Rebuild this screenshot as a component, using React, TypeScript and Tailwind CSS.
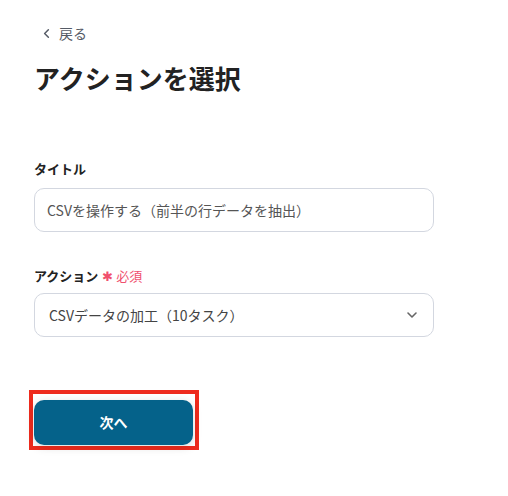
import { ChevronDown, ChevronLeft } from 'lucide-react'

const font = { fontFamily: '"Noto Sans CJK JP", "Noto Sans", sans-serif' }

function App(): JSX.Element {
  return (
    <div className="min-h-[496px] w-[508px] bg-white pl-[34px] pt-[24px]" style={font}>
      {/* Back link */}
      <div className="flex h-[18px] items-center gap-[5px] pl-[5px] text-[14px] text-[#555b66]">
        <ChevronLeft className="h-[15px] w-[15px]" strokeWidth={2.4} />
        <span>戻る</span>
      </div>

      {/* Title */}
      <h1 className="mt-[17px] text-[26px] leading-[38px] font-bold text-[#222]">アクションを選択</h1>

      {/* Form */}
      <div className="mt-[63px] w-[400px]">
        <label className="block text-[13px] leading-[18px] font-bold text-[#222]">タイトル</label>
        <div className="mt-[10px] flex h-[44px] items-center rounded-[10px] border border-[#d3d7e0] px-[12px] text-[14px] text-[#555]">
          CSVを操作する（前半の行データを抽出）
        </div>

        <div className="mt-[35px] flex items-center text-[13px] leading-[18px] font-bold text-[#222]">
          アクション
          <span className="ml-[4px] font-normal text-[#f0506e]">✱ 必須</span>
        </div>
        <div className="mt-[8px] flex h-[44px] items-center justify-between rounded-[10px] border border-[#d3d7e0] pl-[14px] pr-[13px] text-[14px] text-[#444]">
          <span>CSVデータの加工（10タスク）</span>
          <ChevronDown className="h-[16px] w-[16px] text-[#666]" strokeWidth={2.4} />
        </div>
      </div>

      {/* Next */}
      <div className="mt-[53px] -ml-[5px] inline-block border-[4px] border-[#ee2b1d] pt-[6px] pl-[1px] pr-[2px] pb-[1px]">
        <button
          type="button"
          className="flex h-[45px] w-[159px] items-center justify-center rounded-[10px] bg-[#05628a] text-[14px] font-bold text-white shadow-[0_2px_10px_rgba(0,0,0,0.15)]"
        >
          次へ
        </button>
      </div>
    </div>
  )
}

export default App
